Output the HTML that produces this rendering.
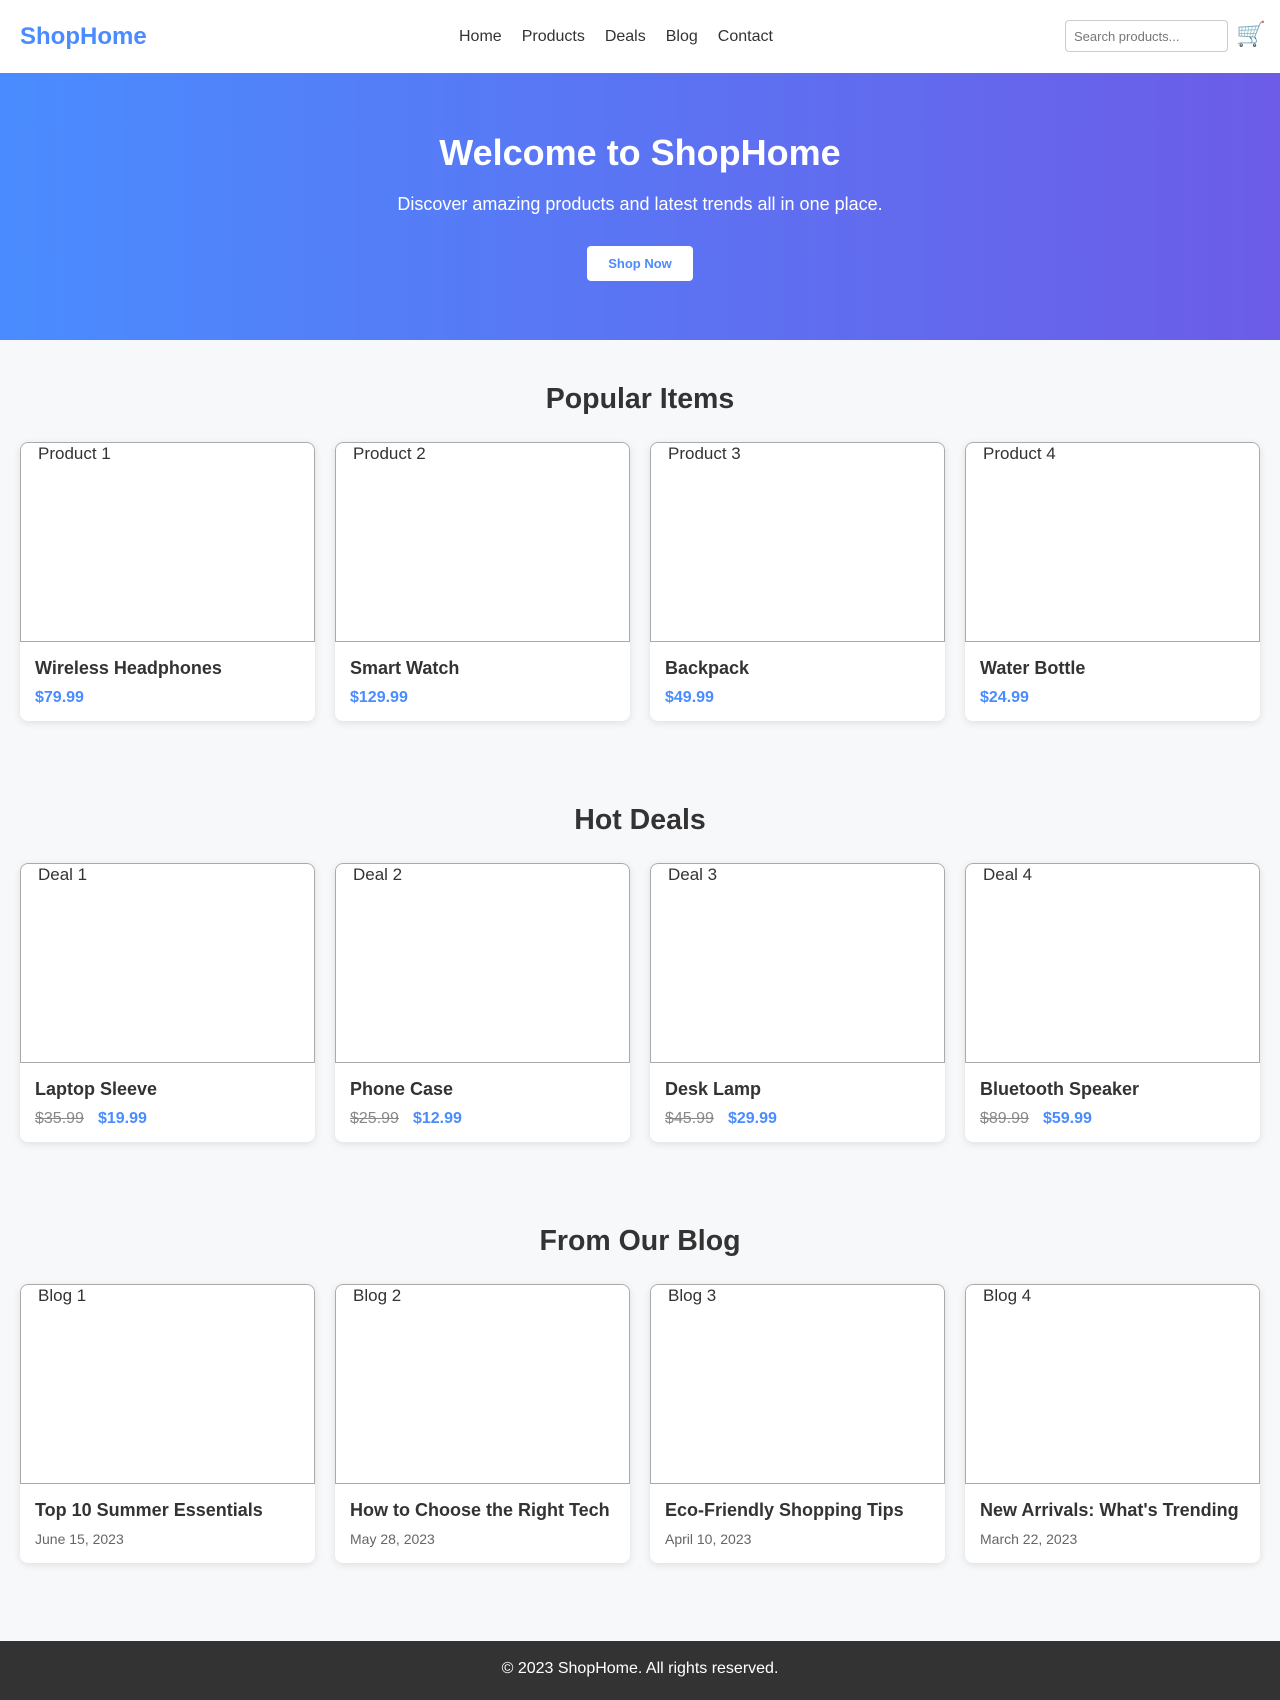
<!DOCTYPE html>
<html><head><meta charset="utf-8"><style>
*{box-sizing:border-box;margin:0;padding:0}
body{width:1280px;height:1700px;background:#f7f8fa;font-family:"Liberation Sans",Arial,sans-serif;color:#333;overflow:hidden;position:relative}
header{height:73px;background:#fff;display:flex;align-items:center;padding:0 20px;position:relative}
.logo{font-size:24px;font-weight:bold;color:#4a8cff}
nav{position:absolute;left:459px;top:0;height:73px;display:flex;align-items:center;gap:20px;font-size:16px;color:#333}
.search{position:absolute;left:1065px;top:20px;width:163px;height:32px;border:1px solid #ccc;border-radius:4px;font-size:13px;color:#777;padding:8px}
.cart{position:absolute;left:1236px;top:20px;font-size:24px;color:#777}
.hero{height:267px;background:linear-gradient(90deg,#4a8cff,#6c5ce7);color:#fff;text-align:center;padding-top:57px}
.hero h1{font-size:36px;line-height:46px;height:46px}
.hero p{font-size:18px;line-height:22px;margin-top:17px}
.btn{display:inline-block;margin-top:31px;width:106px;height:35px;background:#fff;color:#4a8cff;font-weight:bold;font-size:13px;border-radius:4px;line-height:35px}
section{padding:40px 20px 40px}
h2{font-size:28.5px;line-height:38px;text-align:center;margin-bottom:24px;color:#333}
.grid{display:grid;grid-template-columns:repeat(4,295px);gap:20px}
.card{background:#fff;border-radius:8px;box-shadow:0 2px 8px rgba(0,0,0,.1);height:279px;overflow:hidden}
.img{height:200px;border:1px solid #aaa;border-radius:8px 8px 0 0;font-size:17px;padding:2px 0 0 17px;color:#333;line-height:18px}
.body{padding:16px 15px}
.t{font-size:18px;font-weight:bold;margin-bottom:10px;white-space:nowrap}
.p{font-size:16px;font-weight:bold;color:#4a8cff}
.o{color:#888;text-decoration:line-through;font-weight:normal;margin-right:14px}
.d{font-size:14px;color:#666}
footer{position:absolute;top:1641px;left:0;width:1280px;height:59px;background:#333;color:#fff;text-align:center;line-height:56px;font-size:16px}
</style></head><body>
<header><div class="logo">ShopHome</div>
<nav><span>Home</span><span>Products</span><span>Deals</span><span>Blog</span><span>Contact</span></nav>
<div class="search">Search products...</div><div class="cart">🛒</div></header>
<div class="hero"><h1>Welcome to ShopHome</h1><p>Discover amazing products and latest trends all in one place.</p><div class="btn">Shop Now</div></div>
<section><h2>Popular Items</h2><div class="grid">
<div class="card"><div class="img">Product 1</div><div class="body"><div class="t">Wireless Headphones</div><div class="p">$79.99</div></div></div>
<div class="card"><div class="img">Product 2</div><div class="body"><div class="t">Smart Watch</div><div class="p">$129.99</div></div></div>
<div class="card"><div class="img">Product 3</div><div class="body"><div class="t">Backpack</div><div class="p">$49.99</div></div></div>
<div class="card"><div class="img">Product 4</div><div class="body"><div class="t">Water Bottle</div><div class="p">$24.99</div></div></div>
</div></section>
<section><h2>Hot Deals</h2><div class="grid">
<div class="card"><div class="img">Deal 1</div><div class="body"><div class="t">Laptop Sleeve</div><div class="p"><span class="o">$35.99</span>$19.99</div></div></div>
<div class="card"><div class="img">Deal 2</div><div class="body"><div class="t">Phone Case</div><div class="p"><span class="o">$25.99</span>$12.99</div></div></div>
<div class="card"><div class="img">Deal 3</div><div class="body"><div class="t">Desk Lamp</div><div class="p"><span class="o">$45.99</span>$29.99</div></div></div>
<div class="card"><div class="img">Deal 4</div><div class="body"><div class="t">Bluetooth Speaker</div><div class="p"><span class="o">$89.99</span>$59.99</div></div></div>
</div></section>
<section><h2>From Our Blog</h2><div class="grid">
<div class="card"><div class="img">Blog 1</div><div class="body"><div class="t">Top 10 Summer Essentials</div><div class="d">June 15, 2023</div></div></div>
<div class="card"><div class="img">Blog 2</div><div class="body"><div class="t">How to Choose the Right Tech</div><div class="d">May 28, 2023</div></div></div>
<div class="card"><div class="img">Blog 3</div><div class="body"><div class="t">Eco-Friendly Shopping Tips</div><div class="d">April 10, 2023</div></div></div>
<div class="card"><div class="img">Blog 4</div><div class="body"><div class="t">New Arrivals: What's Trending</div><div class="d">March 22, 2023</div></div></div>
</div></section>
<footer>© 2023 ShopHome. All rights reserved.</footer>
</body></html>
